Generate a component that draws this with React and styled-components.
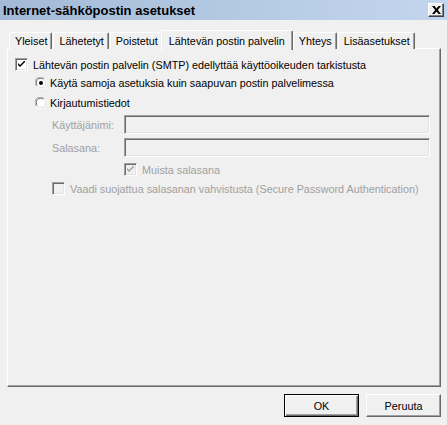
import React from 'react'
import styled, { createGlobalStyle } from 'styled-components'

const GlobalStyle = createGlobalStyle`
  html, body {
    margin: 0;
    padding: 0;
    background: #f0f0f0;
  }
  body {
    font-family: "Liberation Sans", Arial, sans-serif;
    font-size: 10.8px;
    color: #000;
  }
`

const tabs = ['Yleiset', 'Lähetetyt', 'Poistetut', 'Lähtevän postin palvelin', 'Yhteys', 'Lisäasetukset']
const activeTab = 3

const CheckMark = ({ color = '#000' }) => (
  <svg width="7" height="7" viewBox="0 0 7 7">
    <path d="M0 2 L0 4 L2 6 L7 1 L7 -1 L2 4 Z" fill={color} />
  </svg>
)

const Check = ({ checked, disabled }) => (
  <CheckBox $disabled={disabled}>
    {checked && <CheckMark color={disabled ? '#a0a0a0' : '#000'} />}
  </CheckBox>
)

const Radio = ({ checked }) => (
  <svg width="12" height="12" viewBox="0 0 12 12">
    <path d="M1.5 9 A5 5 0 0 1 9 1.5" stroke="#a0a0a0" strokeWidth="1" fill="none" />
    <path d="M2.5 8.5 A4 4 0 0 1 8.5 2.5" stroke="#696969" strokeWidth="1" fill="none" />
    <circle cx="6" cy="6" r="4" fill="#fff" />
    <path d="M10.5 3 A5 5 0 0 1 3 10.5" stroke="#fff" strokeWidth="1" fill="none" />
    <path d="M9.5 3.5 A4 4 0 0 1 3.5 9.5" stroke="#e3e3e3" strokeWidth="1" fill="none" />
    {checked && <circle cx="6" cy="6" r="2" fill="#000" />}
  </svg>
)

const App = () => {
  return (
    <>
      <GlobalStyle />
      <Dialog>
        <TitleBar>
          <Title>Internet-sähköpostin asetukset</Title>
          <CloseButton>
            <svg width="9" height="8" viewBox="0 0 9 8">
              <path d="M0 0 H2.5 L4.5 2.6 L6.5 0 H9 L5.8 4 L9 8 H6.5 L4.5 5.4 L2.5 8 H0 L3.2 4 Z" fill="#000" />
            </svg>
          </CloseButton>
        </TitleBar>

        <TabRow>
          {tabs.map((t, i) => (
            <Tab key={t} $active={i === activeTab}>{t}</Tab>
          ))}
        </TabRow>

        <Panel>
          <Row $top={9} $indent={0}>
            <Check checked />
            <Label>Lähtevän postin palvelin (SMTP) edellyttää käyttöoikeuden tarkistusta</Label>
          </Row>
          <Row $top={5} $indent={20}>
            <Radio checked />
            <Label $gap={3}>Käytä samoja asetuksia kuin saapuvan postin palvelimessa</Label>
          </Row>
          <Row $top={7} $indent={20}>
            <Radio />
            <Label $gap={3}>Kirjautumistiedot</Label>
          </Row>

          <FieldRow $top={6}>
            <FieldLabel>Käyttäjänimi:</FieldLabel>
            <Input disabled />
          </FieldRow>
          <FieldRow $top={4}>
            <FieldLabel>Salasana:</FieldLabel>
            <Input disabled type="password" />
          </FieldRow>

          <Row $top={6} $indent={109}>
            <Check checked disabled />
            <Label $disabled>Muista salasana</Label>
          </Row>
          <Row $top={6} $indent={37}>
            <Check disabled />
            <Label $disabled>Vaadi suojattua salasanan vahvistusta (Secure Password Authentication)</Label>
          </Row>
        </Panel>

        <ButtonRow>
          <Button $default>OK</Button>
          <Button>Peruuta</Button>
        </ButtonRow>
      </Dialog>
    </>
  )
}

export default App

const Dialog = styled.div`
display: flex;
flex-direction: column;
width: 447px;
height: 425px;
background: #f0f0f0;
`

const TitleBar = styled.div`
display: flex;
align-items: center;
justify-content: space-between;
height: 20px;
padding: 0 3px 0 3px;
background: linear-gradient(to right, #a3bad6, #c3d6ee);
`

const Title = styled.div`
font-weight: bold;
font-size: 13px;
`

const CloseButton = styled.div`
display: flex;
align-items: center;
justify-content: center;
width: 16px;
height: 14px;
box-sizing: border-box;
background: #f0f0f0;
border-top: 1px solid #fff;
border-left: 1px solid #fff;
border-right: 1px solid #404040;
border-bottom: 1px solid #404040;
box-shadow: inset -1px -1px 0 #808080;
`

const TabRow = styled.div`
display: flex;
align-items: flex-end;
height: 21px;
margin-top: 8px;
padding: 0 9px;
position: relative;
z-index: 1;
`

const Tab = styled.div`
height: ${({ $active }) => ($active ? '20px' : '17px')};
margin: ${({ $active }) => ($active ? '0 -1px -1px -2px' : '0 0 0 1px')};
padding: ${({ $active }) => ($active ? '0 7px' : '0 4px 0 5px')};
display: flex;
align-items: center;
box-sizing: border-box;
background: #f0f0f0;
border-top: 1px solid #fff;
border-left: 1px solid #fff;
border-right: 1px solid #696969;
border-top-left-radius: 2px;
border-top-right-radius: 2px;
box-shadow: inset -1px 0 0 #a0a0a0;
white-space: nowrap;
&:first-child { margin-left: ${({ $active }) => ($active ? '-2px' : '0')}; }
`

const Panel = styled.div`
flex: 1;
margin: -1px 6px 0 7px;
padding: 0 7px;
display: flex;
flex-direction: column;
border-top: 1px solid #fff;
border-left: 1px solid #fff;
border-right: 1px solid #696969;
border-bottom: 1px solid #696969;
box-shadow: inset -1px -1px 0 #a0a0a0;
`

const Row = styled.div`
display: flex;
align-items: center;
height: 13px;
margin-top: ${({ $top }) => $top}px;
padding-left: ${({ $indent }) => $indent}px;
`

const CheckBox = styled.div`
width: 13px;
height: 13px;
flex: none;
box-sizing: border-box;
display: flex;
align-items: center;
justify-content: center;
background: ${({ $disabled }) => ($disabled ? '#f0f0f0' : '#fff')};
border-top: 1px solid #a0a0a0;
border-left: 1px solid #a0a0a0;
border-right: 1px solid #fff;
border-bottom: 1px solid #fff;
box-shadow: inset 1px 1px 0 #696969, inset -1px -1px 0 #e3e3e3;
`

const Label = styled.span`
margin-left: ${({ $gap }) => $gap ?? 5}px;
color: ${({ $disabled }) => ($disabled ? '#a0a0a0' : '#000')};
white-space: nowrap;
`

const FieldRow = styled.div`
display: flex;
align-items: center;
margin-top: ${({ $top }) => $top}px;
padding-left: 37px;
`

const FieldLabel = styled.span`
width: 72px;
color: #a0a0a0;
`

const Input = styled.input`
width: 306px;
height: 19px;
margin: 0;
padding: 0;
box-sizing: border-box;
background: #f0f0f0;
border-top: 1px solid #a0a0a0;
border-left: 1px solid #a0a0a0;
border-right: 1px solid #fff;
border-bottom: 1px solid #fff;
box-shadow: inset 1px 1px 0 #696969, inset -1px -1px 0 #e3e3e3;
`

const ButtonRow = styled.div`
display: flex;
justify-content: flex-end;
gap: 7px;
padding: 7px 6px 8px;
`

const Button = styled.div`
width: 75px;
height: 23px;
box-sizing: border-box;
display: flex;
align-items: center;
justify-content: center;
background: #f0f0f0;
border: 1px solid ${({ $default }) => ($default ? '#000' : 'transparent')};
box-shadow: ${({ $default }) =>
  $default
    ? 'inset 1px 1px 0 #fff, inset -1px -1px 0 #696969, inset -2px -2px 0 #a0a0a0'
    : 'inset -1px -1px 0 #a0a0a0'};
${({ $default }) => !$default && `
  border-top-color: #fff;
  border-left-color: #fff;
  border-right-color: #696969;
  border-bottom-color: #696969;
`}
`
